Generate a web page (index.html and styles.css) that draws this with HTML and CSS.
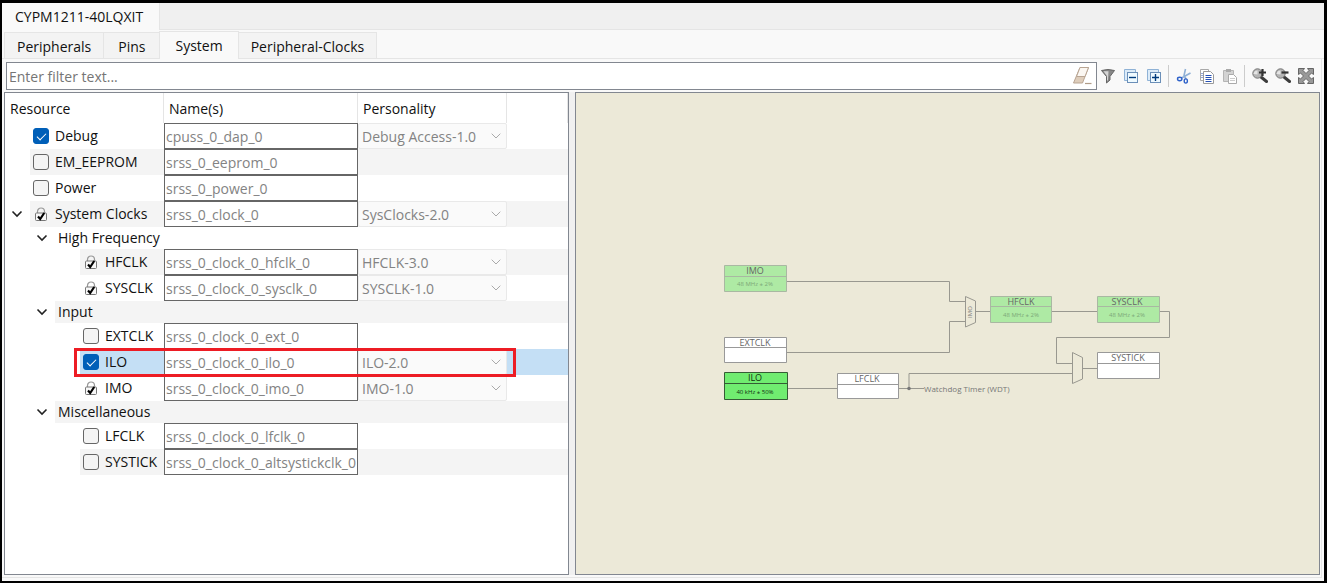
FILE: index.html
```html
<!DOCTYPE html>
<html lang="en">
<head>
<meta charset="utf-8">
<title>Device Configurator</title>
<link rel="stylesheet" href="styles.css">
</head>
<body>
<svg class="defs" aria-hidden="true">
  <symbol id="chevron" viewBox="0 0 12 8"><path d="M1.500 1.500 6 6l4.500-4.500" fill="none" stroke="currentColor" stroke-width="1.600"/></symbol>
  <symbol id="caret" viewBox="0 0 10 6"><path d="M.7.7 5 5 9.300.7" fill="none" stroke="currentColor"/></symbol>
  <symbol id="lock" viewBox="0 0 14 15">
    <path d="M3.500 6V4.500a3.500 3.500 0 0 1 7 0V6" fill="none" stroke="#999" stroke-width="1.200"/>
    <rect x="1.500" y="6" width="11" height="7.500" rx="1" fill="#f8f8f8" stroke="#777"/>
    <path d="M4 9.500 6.200 12l4-6" fill="none" stroke="#000" stroke-width="2.200"/>
  </symbol>
</svg>
<div class="window">
  <header class="device-bar"><button class="device-tab">CYPM1211-40LQXIT</button></header>
  <nav class="tabs">
    <button class="tab">Peripherals</button>
    <button class="tab">Pins</button>
    <button class="tab active">System</button>
    <button class="tab">Peripheral-Clocks</button>
  </nav>
  <main class="page">
    <div class="toolbar">
      <div class="filter">
        <input type="text" placeholder="Enter filter text..." aria-label="Filter text">
        <button class="icon" aria-label="Clear filter"><svg viewBox="0 0 20 20"><path d="M8 1.500h8.500L10.500 17H1.500z" fill="#decdbb" stroke="#b9a593"/><path d="M8 1.500h8.500L13 10.500H4.500z" fill="#fbf7f2" stroke="#b9a593"/><path d="M13 17.500h6.500" stroke="#b09c88" stroke-width="1.200"/></svg></button>
      </div>
      <div class="icons">
        <button class="icon" aria-label="Filter"><svg viewBox="0 0 16 16"><path d="M1.500 2.500q6.500-2 13 0L10 8.500V12l-3.500 3V8.500z" fill="#888" stroke="#666"/><path d="M3.500 3.200h5L8 12l-1 1V8z" fill="#d6d6d6"/></svg></button>
        <button class="icon" aria-label="Collapse all"><svg viewBox="0 0 16 16"><path d="M1.500 12.500v-11h11v3h-8v8z" fill="#dcebf8" stroke="#8fb2d6"/><rect x="4.500" y="4.500" width="10" height="10" fill="#effaff" stroke="#6b8fb8"/><path d="M6 9.500h7" stroke="#003a7c" stroke-width="1.400"/></svg></button>
        <button class="icon" aria-label="Expand all"><svg viewBox="0 0 16 16"><path d="M1.500 12.500v-11h11v3h-8v8z" fill="#dcebf8" stroke="#8fb2d6"/><rect x="4.500" y="4.500" width="10" height="10" fill="#effaff" stroke="#6b8fb8"/><path d="M6 9.500h7M9.500 6v7" stroke="#003a7c" stroke-width="1.400"/></svg></button>
      </div>
      <div class="icons">
        <button class="icon" aria-label="Cut"><svg viewBox="0 0 16 16"><path d="M9.500 1 8 7.500l2 3.500M14.500 5 5.500 10" fill="none" stroke="#8fb0d6" stroke-width="1.600"/><ellipse cx="3.700" cy="11" rx="2.200" ry="1.700" fill="none" stroke="#2f62c9" stroke-width="1.400"/><ellipse cx="9.800" cy="13" rx="1.600" ry="2.100" fill="none" stroke="#2f62c9" stroke-width="1.400"/></svg></button>
        <button class="icon" aria-label="Copy"><svg viewBox="0 0 16 16"><path d="M1.500 1.500h8v11h-8z" fill="#fff" stroke="#a9a9a9"/><path d="M4.500 3.500h7l3 3v9h-10z" fill="#fff" stroke="#9a9a9a"/><path d="M2.500 5.500h1M2.500 7.500h1M2.500 9.500h1M6.500 7.500h6M6.500 9.500h6M6.500 11.500h6M6.500 13.500h6" stroke="#2450b5"/></svg></button>
        <button class="icon" aria-label="Paste"><svg viewBox="0 0 16 16"><path d="M1.500 2.500h10v11h-10z" fill="#d3d3d3" stroke="#b5b5b5"/><path d="M4 1h5v3H4z" fill="#aaa"/><path d="M6.500 6.500h5l3 3v6h-8z" fill="#fff" stroke="#aaa"/><path d="M8 10.500h5M8 12.500h5" stroke="#ccc"/></svg></button>
      </div>
      <div class="icons">
        <button class="icon" aria-label="Zoom in"><svg viewBox="0 0 16 16"><path d="m9 9 5.500 4.500" stroke="#3c3c3c" stroke-width="3" stroke-linecap="round"/><circle cx="5.500" cy="5.500" r="4.700" fill="#b4b4b4" stroke="#777"/><path d="M1.500 6a4 4 0 0 1 4-3.500v4z" fill="#e4e4e4"/><path d="M7 4.500h7M10.500 1v7" stroke="#333" stroke-width="2.200"/></svg></button>
        <button class="icon" aria-label="Zoom out"><svg viewBox="0 0 16 16"><path d="m9 9 5.500 4.500" stroke="#3c3c3c" stroke-width="3" stroke-linecap="round"/><circle cx="5.500" cy="5.500" r="4.700" fill="#b4b4b4" stroke="#777"/><path d="M1.500 6a4 4 0 0 1 4-3.500v4z" fill="#e4e4e4"/><path d="M6.500 4.500h7" stroke="#333" stroke-width="2.200"/></svg></button>
        <button class="icon" aria-label="Fit to view"><svg viewBox="0 0 16 16"><path d="M.5.500h6L5 2.500l3 3 3-3-1.500-2h6v6l-2-1.500-3 3 3 3 2-1.500v6h-6l1.500-2-3-3-3 3 1.500 2h-6v-6l2 1.500 3-3-3-3-2 1.500z" fill="#999" stroke="#666"/></svg></button>
      </div>
    </div>
    <div class="split">
      <section class="tree">
        <table>
          <colgroup><col class="c-res"><col class="c-name"><col class="c-pers"><col></colgroup>
          <thead><tr><th>Resource</th><th>Name(s)</th><th>Personality</th><th></th></tr></thead>
          <tbody>
            <tr><td><label class="res l1"><input type="checkbox" checked>Debug</label></td><td><input class="name" disabled aria-label="Debug name" value="cpuss_0_dap_0"></td><td><div class="pick"><select disabled aria-label="Debug personality"><option>Debug Access-1.0</option></select><svg><use href="#caret"/></svg></div></td><td></td></tr>
            <tr class="alt"><td><label class="res l1"><input type="checkbox">EM_EEPROM</label></td><td><input class="name" disabled aria-label="EM_EEPROM name" value="srss_0_eeprom_0"></td><td></td><td></td></tr>
            <tr><td><label class="res l1"><input type="checkbox">Power</label></td><td><input class="name" disabled aria-label="Power name" value="srss_0_power_0"></td><td></td><td></td></tr>
            <tr class="alt"><td><div class="open"><button class="twist" aria-label="Collapse System Clocks"><svg><use href="#chevron"/></svg></button><span class="res"><svg class="lock"><use href="#lock"/></svg>System Clocks</span></div></td><td><input class="name" disabled aria-label="System Clocks name" value="srss_0_clock_0"></td><td><div class="pick"><select disabled aria-label="System Clocks personality"><option>SysClocks-2.0</option></select><svg><use href="#caret"/></svg></div></td><td></td></tr>
            <tr class="group"><td colspan="4"><div class="open deep"><button class="twist" aria-label="Collapse High Frequency"><svg><use href="#chevron"/></svg></button><span class="res">High Frequency</span></div></td></tr>
            <tr class="alt"><td><span class="res l3"><svg class="lock"><use href="#lock"/></svg>HFCLK</span></td><td><input class="name" disabled aria-label="HFCLK name" value="srss_0_clock_0_hfclk_0"></td><td><div class="pick"><select disabled aria-label="HFCLK personality"><option>HFCLK-3.0</option></select><svg><use href="#caret"/></svg></div></td><td></td></tr>
            <tr><td><span class="res l3"><svg class="lock"><use href="#lock"/></svg>SYSCLK</span></td><td><input class="name" disabled aria-label="SYSCLK name" value="srss_0_clock_0_sysclk_0"></td><td><div class="pick"><select disabled aria-label="SYSCLK personality"><option>SYSCLK-1.0</option></select><svg><use href="#caret"/></svg></div></td><td></td></tr>
            <tr class="group alt"><td colspan="4"><div class="open deep"><button class="twist" aria-label="Collapse Input"><svg><use href="#chevron"/></svg></button><span class="res">Input</span></div></td></tr>
            <tr><td><label class="res l3"><input type="checkbox">EXTCLK</label></td><td><input class="name" disabled aria-label="EXTCLK name" value="srss_0_clock_0_ext_0"></td><td></td><td></td></tr>
            <tr class="selected"><td><label class="res l3"><input type="checkbox" checked>ILO</label><span class="callout"></span></td><td><input class="name" disabled aria-label="ILO name" value="srss_0_clock_0_ilo_0"></td><td><div class="pick"><select disabled aria-label="ILO personality"><option>ILO-2.0</option></select><svg><use href="#caret"/></svg></div></td><td></td></tr>
            <tr><td><span class="res l3"><svg class="lock"><use href="#lock"/></svg>IMO</span></td><td><input class="name" disabled aria-label="IMO name" value="srss_0_clock_0_imo_0"></td><td><div class="pick"><select disabled aria-label="IMO personality"><option>IMO-1.0</option></select><svg><use href="#caret"/></svg></div></td><td></td></tr>
            <tr class="group alt"><td colspan="4"><div class="open deep"><button class="twist" aria-label="Collapse Miscellaneous"><svg><use href="#chevron"/></svg></button><span class="res">Miscellaneous</span></div></td></tr>
            <tr><td><label class="res l3"><input type="checkbox">LFCLK</label></td><td><input class="name" disabled aria-label="LFCLK name" value="srss_0_clock_0_lfclk_0"></td><td></td><td></td></tr>
            <tr class="alt"><td><label class="res l3"><input type="checkbox">SYSTICK</label></td><td><input class="name" disabled aria-label="SYSTICK name" value="srss_0_clock_0_altsystickclk_0"></td><td></td><td></td></tr>
          </tbody>
        </table>
      </section>
      <section class="canvas">
        <svg class="diagram" viewBox="721 262 452 144">
          <g class="wire">
            <path d="M786 281.500h162.500v20H964M786 352.500h162.500v-31H964M975 311.500h14M1051 311.500h45M1159 311.500h9.500v26h-113v26H1071M787 388.500h49M898 388.500h25M908 388V373.500h163M1082 368.500h14"/>
            <path d="M964.500 296.500l10 4.500v21.500l-10 4.500zM1071.500 352.500l10 5v21.500l-10 4.500z"/>
          </g>
          <circle cx="908" cy="388.500" r="1.800" fill="#777"/>
          <g class="node on"><path d="M723.500 265.500h62v26h-62zM723.500 276.500h62"/><text x="754" y="274">IMO</text><text class="rate" x="754" y="286">48 MHz ± 2%</text></g>
          <g class="node"><path d="M723.500 337.500h62v25h-62zM723.500 347.500h62"/><text x="754" y="346">EXTCLK</text></g>
          <g class="node current"><path d="M723.500 372.500h63v27h-63zM723.500 383.500h63"/><text x="754" y="381">ILO</text><text class="rate" x="754" y="394">40 kHz ± 50%</text></g>
          <g class="node"><path d="M836.500 373.500h61v25h-61zM836.500 384.500h61"/><text x="866" y="382">LFCLK</text></g>
          <g class="node on"><path d="M989.500 296.500h61v26h-61zM989.500 306.500h61"/><text x="1020" y="305">HFCLK</text><text class="rate" x="1020" y="317">48 MHz ± 2%</text></g>
          <g class="node on"><path d="M1096.500 296.500h62v26h-62zM1096.500 306.500h62"/><text x="1126" y="305">SYSCLK</text><text class="rate" x="1126" y="317">48 MHz ± 2%</text></g>
          <g class="node"><path d="M1096.500 352.500h62v26h-62zM1096.500 363.500h62"/><text x="1127" y="361">SYSTICK</text></g>
          <text class="mux" transform="translate(971 312) rotate(-90)">IMO</text>
          <text class="note" x="923" y="392">Watchdog Timer (WDT)</text>
        </svg>
      </section>
    </div>
  </main>
</div>
</body>
</html>
```
FILE: styles.css
```css
* { box-sizing: border-box; }
body { margin: 0; font: 14px/20px "Open Sans", "Noto Sans", sans-serif; color: #111; }
button, input, select { font: inherit; color: inherit; }
button { border: 0; background: none; padding: 0; }
svg { display: block; }
.defs { position: absolute; width: 0; height: 0; }

.window { display: flex; flex-direction: column; min-height: 100vh; border: solid #000; border-width: 3px 3px 2px 2px; background: #f9f9f9; }
.device-bar { display: flex; height: 27px; background: #f0f0f0; border-bottom: 1px solid #e5e5e5; }
.device-tab { margin-bottom: -1px; padding: 0 16px 0 13px; background: #f9f9f9; border-right: 1px solid #e5e5e5; }
.tabs { display: flex; align-items: flex-end; height: 29px; padding-left: 2px; border-bottom: 1px solid #e5e5e5; }
.tab { height: 26px; padding: 2px 12px 0; background: #f3f3f3; border: 1px solid #e5e5e5; border-bottom: 0; margin-right: -1px; }
.tab:nth-child(2) { padding: 2px 14px 0; }
.tab.active { height: 28px; padding: 0 15px; margin-bottom: -1px; background: #f9f9f9; }
.page { flex: 1; display: flex; flex-direction: column; gap: 2px; margin: 0 2px 3px 0; padding: 3px 1px 2px 2px; border: solid #e5e5e5; border-width: 0 1px 1px 0; }

.toolbar { display: flex; align-items: center; height: 28px; padding: 0 6px 0 2px; }
.filter { flex: 1; display: flex; align-items: center; align-self: stretch; background: #fff; border: 1px solid #828790; padding-right: 4px; margin-right: 3px; }
.filter input { flex: 1; border: 0; padding: 2px 2px 0; background: none; outline: 0; }
.filter input::placeholder { color: #757575; opacity: 1; }
.filter svg { width: 20px; height: 20px; }
.icons { display: flex; gap: 7px; }
.icons + .icons { margin-left: 6px; padding-left: 7px; border-left: 1px solid #ccc; height: 22px; align-items: center; }
.icons svg { width: 16px; height: 16px; }

.split { flex: 1; display: grid; grid-template-columns: 565fr 745fr; gap: 6px; background: #f0f0f0; }
.tree { background: #fff; border: 1px solid #828790; }
.canvas { display: flex; align-items: center; justify-content: center; background: #ece9d8; border: 1px solid #828790; }

table { width: 100%; table-layout: fixed; border-collapse: separate; border-spacing: 0; }
.c-res { width: 159px; }
.c-name { width: 194px; }
.c-pers { width: 149px; }
th { height: 30px; padding: 2px 5px 0; text-align: left; font-weight: 400; border-right: 1px solid #e5e5e5; }
td { position: relative; height: 26px; padding: 0; }
.group td { height: 22px; }
.alt td:not(:first-child), .alt .res { background: #f4f4f4; }
.selected td:not(:first-child), .selected .res { background: #c4dff5; }
.res { flex: 1; display: flex; align-items: center; gap: 6px; height: 26px; padding-left: 3px; white-space: nowrap; }
.group .res { height: 22px; padding-left: 3px; }
.l1 { margin-left: 25px; }
.l3 { margin-left: 75px; }
.open { display: flex; }
.deep { margin-left: 25px; }
.twist { width: 25px; padding-left: 6px; }
.twist svg { width: 12px; height: 8px; color: #222; }
.lock { width: 16px; height: 15px; }
input[type="checkbox"] { appearance: none; flex: none; width: 16px; height: 16px; margin: 0; border: 1px solid #666; border-radius: 3px; background: #f4f4f4; display: grid; place-items: center; }
input[type="checkbox"]:checked { background: #005fb8; border-color: #005fb8; }
input[type="checkbox"]:checked::before { content: ""; width: 8px; height: 4px; border: solid #fff; border-width: 0 0 1px 1px; transform: translateY(-1px) rotate(-45deg); }
.name { display: block; width: 100%; height: 26px; padding: 0 0 0 1px; border: 1px solid #666; background: #fff; color: #838383; }
.pick { display: grid; align-items: center; height: 26px; }
.pick > * { grid-area: 1 / 1; }
.pick select { appearance: none; width: 100%; height: 26px; padding: 2px 3px 0; border: 1px solid #e9e9e9; border-radius: 2px; background: #fafafa; color: #838383; opacity: 1; }
.pick svg { justify-self: end; width: 10px; height: 6px; margin-right: 6px; color: #aaa; }
.callout { position: absolute; z-index: 1; left: 69px; top: -1px; width: 442px; height: 29px; border: 3px solid #ed1c24; pointer-events: none; }

.diagram { width: 452px; height: 144px; }
.wire { fill: none; stroke: #999890; }
.node path { fill: #fff; stroke: #999; }
.node text { font-size: 9px; text-anchor: middle; fill: #666; }
.node .rate { font-size: 6px; fill: #7da878; }
.node.on path { fill: #aeeaa4; stroke: #a9b8a2; }
.node.current path { fill: #70ec70; stroke: #355c35; }
.node.current text { fill: #103010; }
.mux { font-size: 6px; text-anchor: middle; fill: #777; }
.note { font-size: 8px; fill: #777; }
```
